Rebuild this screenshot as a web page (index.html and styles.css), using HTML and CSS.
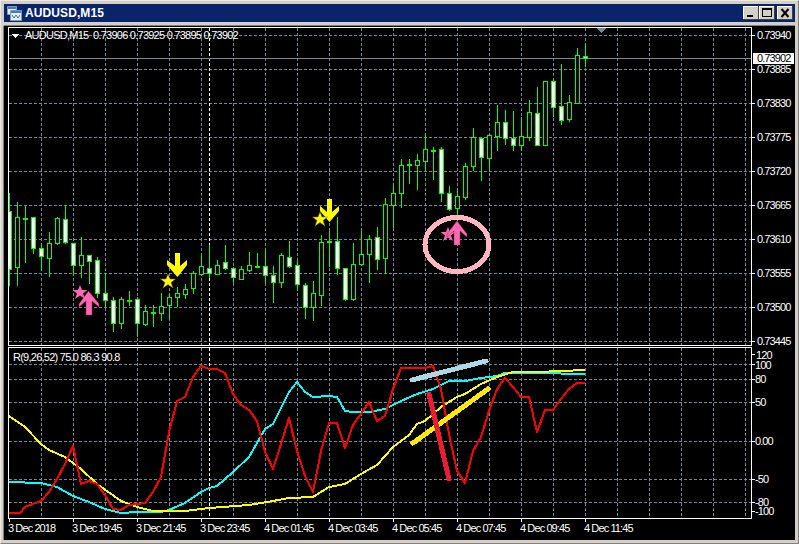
FILE: index.html
```html
<!DOCTYPE html>
<html lang="en">
<head>
<meta charset="utf-8">
<title>AUDUSD,M15</title>
<link rel="stylesheet" href="styles.css">
</head>
<body>
<div class="window">
  <div class="titlebar">
    <svg class="app-icon" width="15" height="15" viewBox="0 0 15 15">
      <path class="icon-back" d="M0.5 0.5h9v8h-9z"/>
      <path class="icon-bar" d="M1 1h8v2h-8z"/>
      <path class="icon-front" d="M3.5 4.5h11v10h-11z"/>
      <path class="icon-bar" d="M4 5h10v2h-10z"/>
      <path class="icon-wave" d="M5 9l2 3 2-3 2 3 2-3"/>
    </svg>
    <span class="title">AUDUSD,M15</span>
    <div class="controls">
      <div class="btn">
        <svg width="16" height="14" viewBox="0 0 16 14"><path class="glyph" d="M4 9h6v2h-6z"/></svg>
      </div>
      <div class="btn">
        <svg width="16" height="14" viewBox="0 0 16 14"><path class="glyph" d="M3 2h10v2h-10zM3 4h1v7h-1zM12 4h1v7h-1zM3 10h10v1h-10z"/></svg>
      </div>
      <div class="btn btn-close">
        <svg width="16" height="14" viewBox="0 0 16 14"><path class="glyph-x" d="M4.500 3l7 8M11.500 3l-7 8"/></svg>
      </div>
    </div>
  </div>
  <div class="client">
    <svg class="chart" width="791" height="514" viewBox="4 26 791 514">
      <defs>
        <clipPath id="plot"><rect x="9" y="28" width="742" height="490"/></clipPath>
      </defs>

      <g class="grid">
        <path d="M41.500 28V345M73.500 28V345M105.500 28V345M137.500 28V345M169.500 28V345M201.500 28V345M233.500 28V345M265.500 28V345M297.500 28V345M329.500 28V345M361.500 28V345M393.500 28V345M425.500 28V345M457.500 28V345M489.500 28V345M521.500 28V345M553.500 28V345M585.500 28V345M617.500 28V345M649.500 28V345M681.500 28V345M713.500 28V345M745.500 28V345"/>
        <path d="M41.500 348V518M73.500 348V518M105.500 348V518M137.500 348V518M169.500 348V518M201.500 348V518M233.500 348V518M265.500 348V518M297.500 348V518M329.500 348V518M361.500 348V518M393.500 348V518M425.500 348V518M457.500 348V518M489.500 348V518M521.500 348V518M553.500 348V518M585.500 348V518M617.500 348V518M649.500 348V518M681.500 348V518M713.500 348V518M745.500 348V518"/>
        <path d="M9 35.500H751M9 69.500H751M9 103.500H751M9 137.500H751M9 171.500H751M9 205.500H751M9 239.500H751M9 273.500H751M9 307.500H751M9 341.500H751"/>
        <path d="M9 364.500H751M9 379.500H751M9 402.500H751M9 441.500H751M9 479.500H751M9 502.500H751"/>
      </g>
      <path class="day-sep" d="M209.500 28V345M209.500 348V518"/>
      <path class="price-line" d="M9 58.500H751"/>
      <path class="shift" d="M597 28h9l-4.500 5z"/>

      <g clip-path="url(#plot)">
        <path class="wick" d="M9.500 193V286M17.500 202V286M25.500 206V263M33.500 218V254M41.500 243V271M49.500 232V277M57.500 217V245M65.500 205V244M73.500 243V276M81.500 237V278M89.500 255V284M97.500 257V298M105.500 273V307M113.500 297V332M121.500 297V329M129.500 291V306M137.500 297V337M145.500 305V326M153.500 305V327M161.500 293V321M169.500 293V320M177.500 287V307M185.500 284V299M193.500 271V294M201.500 254V275M209.500 245V278M217.500 260V275M225.500 245V270M233.500 267V283M241.500 266V280M249.500 252V272M257.500 253V268M265.500 249V283M273.500 266V303M281.500 253V288M289.500 241V268M297.500 261V291M305.500 283V319M313.500 281V321M321.500 235V306M329.500 231V267M337.500 217V275M345.500 268V301M353.500 243V301M361.500 231V266M369.500 235V283M377.500 227V270M385.500 198V274M393.500 183V228M401.500 159V208M409.500 159V184M417.500 154V190M425.500 133V171M433.500 147V180M441.500 147V202M449.500 186V211M457.500 189V218M465.500 163V200M473.500 128V171M481.500 137V181M489.500 134V171M497.500 105V151M505.500 110V145M513.500 111V151M521.500 117V151M529.500 100V141M537.500 87V146M553.500 79V117M561.500 64V125M569.500 95V122M577.500 48V104M585.500 44V67"/>
        <path class="body-hollow" d="M15.500 217.500h4V267.500h-4zM23.500 218.500h4V219.500h-4zM47.500 243.500h4V258.500h-4zM55.500 218.500h4V243.500h-4zM79.500 255.500h4V265.500h-4zM119.500 299.500h4V323.500h-4zM127.500 300.500h4V301.500h-4zM143.500 311.500h4V324.500h-4zM151.500 312.500h4V313.500h-4zM159.500 306.500h4V313.500h-4zM167.500 297.500h4V305.500h-4zM175.500 293.500h4V297.500h-4zM183.500 289.500h4V294.500h-4zM191.500 273.500h4V288.500h-4zM199.500 266.500h4V274.500h-4zM215.500 265.500h4V274.500h-4zM239.500 269.500h4V279.500h-4zM247.500 265.500h4V270.500h-4zM255.500 266.500h4V267.500h-4zM279.500 255.500h4V282.500h-4zM311.500 293.500h4V307.500h-4zM319.500 242.500h4V295.500h-4zM327.500 241.500h4V242.500h-4zM351.500 264.500h4V299.500h-4zM359.500 254.500h4V264.500h-4zM367.500 239.500h4V254.500h-4zM383.500 204.500h4V258.500h-4zM391.500 193.500h4V205.500h-4zM399.500 165.500h4V193.500h-4zM407.500 164.500h4V165.500h-4zM415.500 160.500h4V165.500h-4zM423.500 149.500h4V161.500h-4zM431.500 150.500h4V151.500h-4zM455.500 196.500h4V208.500h-4zM463.500 166.500h4V197.500h-4zM471.500 137.500h4V166.500h-4zM487.500 135.500h4V158.500h-4zM495.500 122.500h4V136.500h-4zM519.500 136.500h4V145.500h-4zM527.500 112.500h4V137.500h-4zM543.500 81.500h4V145.500h-4zM567.500 102.500h4V119.500h-4zM575.500 55.500h4V103.500h-4z"/>
        <path class="body-white" d="M7.500 211.500h4V269.500h-4zM31.500 217.500h4V248.500h-4zM39.500 248.500h4V256.500h-4zM63.500 219.500h4V242.500h-4zM71.500 243.500h4V265.500h-4zM87.500 255.500h4V261.500h-4zM95.500 260.500h4V293.500h-4zM103.500 293.500h4V300.500h-4zM111.500 300.500h4V323.500h-4zM135.500 299.500h4V323.500h-4zM207.500 268.500h4V273.500h-4zM223.500 262.500h4V268.500h-4zM231.500 268.500h4V277.500h-4zM263.500 266.500h4V275.500h-4zM271.500 275.500h4V282.500h-4zM287.500 257.500h4V266.500h-4zM295.500 265.500h4V284.500h-4zM303.500 285.500h4V307.500h-4zM335.500 241.500h4V268.500h-4zM343.500 268.500h4V299.500h-4zM375.500 237.500h4V259.500h-4zM439.500 149.500h4V193.500h-4zM447.500 193.500h4V209.500h-4zM479.500 138.500h4V157.500h-4zM503.500 122.500h4V138.500h-4zM511.500 138.500h4V145.500h-4zM535.500 113.500h4V145.500h-4zM551.500 81.500h4V107.500h-4zM559.500 106.500h4V120.500h-4zM583.500 56.500h4V58.500h-4z"/>

        <polyline class="line line-cyan" points="9,482 41,483 57,487 73,496 89,502 105,509 121,513 137,512 161,512 169,510 185,503 201,492 209,488 217,486 233,472 249,457 265,429 273,424 289,392 297,382 305,392 313,397 329,396 337,397 345,411 353,412 369,412 385,409 401,401 417,394 433,389 449,381 465,381 481,378 497,376 505,373 537,373 585,374"/>
        <polyline class="line line-yellow" points="9,416 25,427 41,444 49,450 65,457 81,469 97,484 121,501 137,507 153,511 185,511 209,508 249,505 273,501 289,498 313,497 329,487 345,484 361,474 377,465 393,447 409,435 417,424 425,421 441,407 457,397 465,394 481,384 497,377 513,372 537,372 585,370"/>
        <polyline class="line line-red" points="9,513 20,513 25,507 41,501 49,492 57,479 65,464 73,446 81,484 89,481 97,484 105,495 113,509 121,510 129,505 137,504 145,503 153,492 161,477 169,432 177,401 185,397 193,377 201,366 209,369 217,369 225,373 233,394 241,405 249,410 257,421 265,452 273,469 281,444 289,418 297,451 305,476 313,492 321,451 329,423 337,423 345,448 353,425 361,414 369,402 377,421 385,416 393,389 401,368 409,368 417,368 425,368 433,366 441,389 449,434 457,471 465,483 473,451 481,437 489,411 497,389 505,378 513,387 521,397 529,397 537,432 545,410 553,410 561,399 569,389 577,383 585,383"/>

        <path class="draw draw-blue" d="M412 380L486 361"/>
        <path class="draw draw-yellow" d="M413 443L488 389"/>
        <path class="draw draw-red" d="M429 394L449 479"/>
      </g>

      <ellipse class="ring" cx="457" cy="244.500" rx="32" ry="27"/>

      <path class="arrow arrow-pink" d="M88.500 291L99 304V307L92 301V315H86V301L79 307V304z"/>
      <path class="star star-pink" d="M80 285l2 5h5.500l-4.500 3.500 2 5.500-5-3.500-5 3.500 2-5.500-4.500-3.500h5.500z"/>
      <path class="arrow arrow-yellow" d="M175 253H180V266L187 260V265L177.500 277L167 265V260L175 266z"/>
      <path class="star star-yellow" d="M168 274l2 5h5.500l-4.500 3.500 2 5.500-5-3.500-5 3.500 2-5.500-4.500-3.500h5.500z"/>
      <path class="arrow arrow-yellow" d="M327 199H332V212L339 206V211L329.500 222L320 211V206L327 212z"/>
      <path class="star star-yellow" d="M320 212l2 5h5.500l-4.500 3.500 2 5.500-5-3.500-5 3.500 2-5.500-4.500-3.500h5.500z"/>
      <path class="star star-pink" d="M448 227l2 5h5.500l-4.500 3.500 2 5.500-5-3.500-5 3.500 2-5.500-4.500-3.500h5.500z"/>
      <path class="arrow arrow-pink" d="M457 221L467 234V237L460 231V245H454V231L447 237V234z"/>

      <path class="frame" d="M8.500 27.500H751.500V345.500H8.500zM8.500 347.500H751.500V518.500H8.500z"/>
      <path class="frame" d="M752 35.500h3M752 69.500h3M752 103.500h3M752 137.500h3M752 171.500h3M752 205.500h3M752 239.500h3M752 273.500h3M752 307.500h3M752 341.500h3M752 354.500h3M752 364.500h3M752 379.500h3M752 402.500h3M752 441.500h3M752 479.500h3M752 502.500h3M752 511.500h3"/>
      <path class="frame" d="M9.500 519v3M73.500 519v3M137.500 519v3M201.500 519v3M265.500 519v3M329.500 519v3M393.500 519v3M457.500 519v3M521.500 519v3M585.500 519v3"/>

      <path class="legend-mark" d="M11 34h8l-4 4z"/>
      <text class="label label-wide" x="25" y="39">AUDUSD,M15  0.73906 0.73925 0.73895 0.73902</text>
      <text class="label label-wide" x="13" y="361">R(9,26,52) 75.0 86.3 90.8</text>

      <text class="label" x="757" y="39">0.73940</text>
      <rect class="price-box" x="753" y="53" width="41" height="11"/>
      <text class="label label-dark" x="757" y="62">0.73902</text>
      <text class="label" x="757" y="73">0.73885</text>
      <text class="label" x="757" y="107">0.73830</text>
      <text class="label" x="757" y="141">0.73775</text>
      <text class="label" x="757" y="175">0.73720</text>
      <text class="label" x="757" y="209">0.73665</text>
      <text class="label" x="757" y="243">0.73610</text>
      <text class="label" x="757" y="277">0.73555</text>
      <text class="label" x="757" y="311">0.73500</text>
      <text class="label" x="757" y="345">0.73445</text>

      <text class="label" x="756" y="359">120</text>
      <text class="label" x="755" y="369">100</text>
      <text class="label" x="755" y="383">80</text>
      <text class="label" x="755" y="406">50</text>
      <text class="label" x="755" y="445">0.00</text>
      <text class="label" x="755" y="483">-50</text>
      <text class="label" x="755" y="506">-80</text>
      <text class="label" x="755" y="515">-100</text>

      <text class="label" x="8" y="532">3 Dec 2018</text>
      <text class="label" x="72" y="532">3 Dec 19:45</text>
      <text class="label" x="136" y="532">3 Dec 21:45</text>
      <text class="label" x="200" y="532">3 Dec 23:45</text>
      <text class="label" x="264" y="532">4 Dec 01:45</text>
      <text class="label" x="328" y="532">4 Dec 03:45</text>
      <text class="label" x="392" y="532">4 Dec 05:45</text>
      <text class="label" x="456" y="532">4 Dec 07:45</text>
      <text class="label" x="520" y="532">4 Dec 09:45</text>
      <text class="label" x="584" y="532">4 Dec 11:45</text>
    </svg>
  </div>
</div>
</body>
</html>
```

FILE: styles.css
```css
* { box-sizing: border-box; }

html, body {
  margin: 0;
  padding: 0;
  width: 799px;
  height: 544px;
  overflow: hidden;
  background: #d4d0c8;
}

.window {
  width: 799px;
  height: 544px;
  padding: 3px;
  display: flex;
  flex-direction: column;
  background: #d4d0c8;
  border-top: 1px solid #ece9e1;
  border-left: 1px solid #ece9e1;
  border-right: 1px solid #808080;
  border-bottom: 1px solid #808080;
}

.titlebar {
  flex: none;
  height: 18px;
  display: flex;
  align-items: center;
  gap: 3px;
  padding: 0 2px 0 3px;
  background: #0a246a;
}

.app-icon { flex: none; }
.icon-back, .icon-front { fill: #e8f0fa; stroke: #7f9db9; }
.icon-bar { fill: #4a78c0; }
.icon-wave { fill: none; stroke: #3a70b8; stroke-width: 1; }

.title {
  font: bold 12px "Liberation Sans", Arial, sans-serif;
  color: #fff;
  letter-spacing: 0.1px;
  white-space: nowrap;
}

.controls {
  margin-left: auto;
  display: flex;
  gap: 0;
}

.btn {
  width: 16px;
  height: 14px;
  background: #d4d0c8;
  box-shadow: inset -1px -1px 0 #404040, inset 1px 1px 0 #fff;
  display: flex;
}

.btn-close { margin-left: 2px; }
.glyph { fill: #000; }
.glyph-x { fill: none; stroke: #000; stroke-width: 2; }

.client {
  flex: none;
  width: 791px;
  height: 514px;
  margin-top: 4px;
  background: #000;
  box-shadow: 0 -1px 0 #808080, -1px 0 0 #808080;
}

.chart {
  display: block;
  shape-rendering: crispEdges;
}

.grid path {
  fill: none;
  stroke: #778899;
  stroke-width: 1;
  stroke-dasharray: 3 2;
}

.day-sep {
  fill: none;
  stroke: #fff;
  stroke-width: 1;
  stroke-dasharray: 3 2;
}

.price-line { fill: none; stroke: #778899; stroke-width: 1; }
.shift { fill: #778899; }
.wick { fill: none; stroke: #00ff00; stroke-width: 1; }
.body-hollow { fill: #000; stroke: #00ff00; stroke-width: 1; }
.body-white { fill: #fff; stroke: #00ff00; stroke-width: 1; }

.line { fill: none; stroke-width: 2; stroke-linejoin: round; }
.line-red { stroke: #ff0000; }
.line-cyan { stroke: #00ffff; }
.line-yellow { stroke: #ffff00; }

.draw { fill: none; stroke-width: 5; stroke-linecap: round; }
.draw-blue { stroke: #add8e6; }
.draw-yellow { stroke: #ffeb00; }
.draw-red { stroke: #ed1c34; }

.ring { fill: none; stroke: #ffb6c1; stroke-width: 5; }

.arrow, .star { shape-rendering: geometricPrecision; }
.arrow-pink { fill: #ff69b4; stroke: #a02050; stroke-width: 0.5; }
.arrow-yellow { fill: #ffff00; }
.star-pink { fill: #ff69b4; }
.star-yellow { fill: #ffff00; stroke: #806000; stroke-width: 0.5; }

.frame { fill: none; stroke: #fff; stroke-width: 1; }
.legend-mark { fill: #fff; }
.price-box { fill: #fff; }

.label {
  font-family: "Liberation Sans", Arial, sans-serif;
  font-size: 11px;
  letter-spacing: -0.9px;
  fill: #fff;
  white-space: pre;
}

.label-wide { letter-spacing: -0.75px; }
.label-dark { fill: #000; }
```
